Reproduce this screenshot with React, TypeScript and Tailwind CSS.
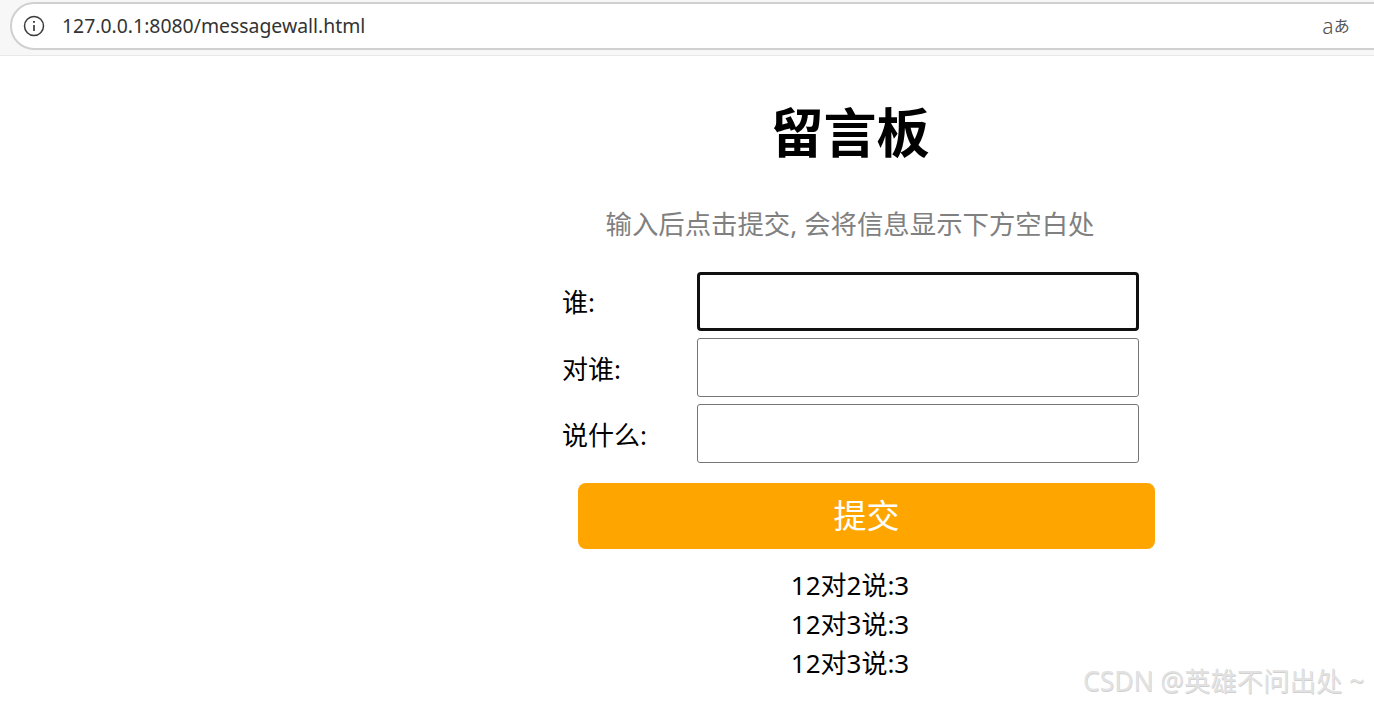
export default function App() {
  const font = { fontFamily: '"Noto Sans", "Noto Sans CJK SC", sans-serif' };
  return (
    <div className="relative h-[705px] w-[1374px] overflow-hidden bg-white text-black" style={font}>
      <div className="h-[56px] overflow-hidden border-b border-[#e8e8e8] bg-[#f7f7f7] pl-[10px] pt-[2px]">
        <div className="flex h-[48px] w-[1420px] items-center rounded-[24px] border-2 border-[#d0d0d0] bg-white pl-[11px]">
          <svg width="22" height="22" viewBox="0 0 22 22" fill="none" stroke="#3c3c3c" strokeWidth="1.5">
            <circle cx="11" cy="11" r="9.5" />
            <path d="M11 10v6" strokeWidth="1.7" />
            <path d="M11 6v1.8" strokeWidth="1.9" />
          </svg>
          <span className="ml-[17px] text-[19.4px] text-[#333]">127.0.0.1:8080/messagewall.html</span>
          <span className="ml-[957px] flex items-center leading-none text-[#555]">
            <span className="text-[21px] font-light leading-none">a</span>
            <span className="text-[16px] leading-none">あ</span>
          </span>
        </div>
      </div>
      <main className="ml-[562px] w-[576px]">
        <h1 className="mt-[38px] text-center text-[53px] font-bold leading-[78px]">留言板</h1>
        <p className="mt-[34px] text-center text-[26.4px] leading-[36px] text-[#808080]">输入后点击提交, 会将信息显示下方空白处</p>
        <div className="mt-[30px] flex flex-col gap-[7px]">
          {["谁:", "对谁:", "说什么:"].map((label, i) => (
            <div key={label} className="flex h-[59px] items-center">
              <span className={i === 0 ? "w-[135px] shrink-0 text-[26px] leading-[36px]" : "w-[135px] shrink-0 pt-[2px] text-[26px] leading-[36px]"}>{label}</span>
              <input
                className={
                  i === 0
                    ? "h-[59px] w-[442px] shrink-0 rounded-[4px] border-[3px] border-[#101010] bg-white"
                    : "h-[59px] w-[442px] shrink-0 rounded-[3px] border border-[#767676] bg-white"
                }
              />
            </div>
          ))}
        </div>
        <button className="ml-[16px] mt-[20px] h-[66px] w-[577px] rounded-[8px] bg-[#ffa500] text-[33px] text-white">提交</button>
        <div className="mt-[17px] text-center text-[26px] leading-[39px]">
          <div>12对2说:3</div>
          <div>12对3说:3</div>
          <div>12对3说:3</div>
        </div>
      </main>
      <div className="absolute left-[1083px] top-[663px] whitespace-nowrap text-[26.4px] leading-[36px] text-[#e2e2e2] [text-shadow:0.5px_0.5px_0_#d0d0d0]">CSDN @英雄不问出处 ~</div>
    </div>
  );
}
